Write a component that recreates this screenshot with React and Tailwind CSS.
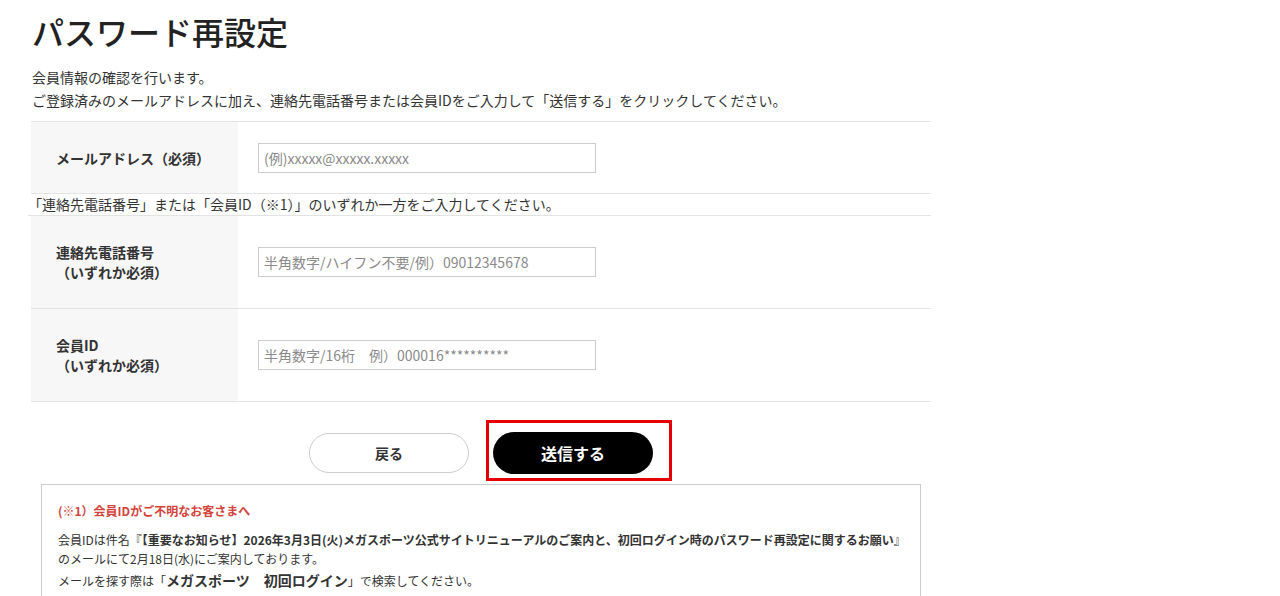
const font = "font-['Noto_Sans_CJK_JP','Noto_Sans',sans-serif]";

const Row = ({ label, placeholder, height }) => (
  <div className={`flex border-b border-[#e3e3e3] ${height}`}>
    <div className="w-[207px] shrink-0 bg-[#f7f7f7] pl-[25px] flex items-center text-[14px] leading-[20px] font-bold text-[#333]">
      <div>{label}</div>
    </div>
    <div className="flex-1 pl-[20px] flex items-center">
      <input
        type="text"
        placeholder={placeholder}
        className="w-[338px] h-[30px] border border-[#cccccc] px-[5px] text-[14px] placeholder:text-[#8a8a8a] outline-none"
      />
    </div>
  </div>
);

export default function App() {
  return (
    <div className={`${font} bg-white text-[#333] min-h-[596px]`}>
      <div className="ml-[31px] w-[900px] pt-[7px]">
        <h1 className="text-[32px] leading-[48px] font-medium text-[#222] pl-[1px]">パスワード再設定</h1>

        <div className="mt-[11px] text-[14px] leading-[23px] pl-[1px]">
          <p>会員情報の確認を行います。</p>
          <p>ご登録済みのメールアドレスに加え、連絡先電話番号または会員IDをご入力して「送信する」をクリックしてください。</p>
        </div>

        <div className="mt-[9px] border-t border-[#e3e3e3]">
          <Row label="メールアドレス（必須）" placeholder="(例)xxxxx@xxxxx.xxxxx" height="h-[72px]" />
          <p className="border-b border-[#e3e3e3] text-[14px] leading-[21px] -ml-[3px]">
            「連絡先電話番号」または「会員ID（※1）」のいずれか一方をご入力してください。
          </p>
          <Row
            label={<>連絡先電話番号<br />（いずれか必須）</>}
            placeholder="半角数字/ハイフン不要/例）09012345678"
            height="h-[93px]"
          />
          <Row
            label={<>会員ID<br />（いずれか必須）</>}
            placeholder="半角数字/16桁　例）000016**********"
            height="h-[93px]"
          />
        </div>

        <div className="mt-[30px] flex justify-center items-center gap-6">
          <button className="w-[160px] h-[40px] rounded-full border border-[#cccccc] bg-white text-[14px] font-bold text-[#333]">
            戻る
          </button>
          <div className="relative">
            <button className="w-[160px] h-[42px] rounded-full bg-black text-white text-[16px] font-bold">
              送信する
            </button>
            <span className="absolute -top-[12px] -left-[7px] -right-[19px] -bottom-[7px] border-[3px] border-[#e60000] pointer-events-none" />
          </div>
        </div>

        <div className="mt-[10px] mx-[10px] border border-[#cccccc] pl-[16px] pr-[4px] pt-[16px] pb-[10px] text-[12px] text-[#333]">
          <p className="font-bold text-[#d2433b] leading-[20px]">(※1）会員IDがご不明なお客さまへ</p>
          <p className="mt-[9px] leading-[19px]">
            <span className="whitespace-nowrap">
              会員IDは件名『<span className="font-bold">【重要なお知らせ】2026年3月3日(火)メガスポーツ公式サイトリニューアルのご案内と、初回ログイン時のパスワード再設定に関するお願い</span>』
            </span>
            <br />
            のメールにて2月18日(水)にご案内しております。
          </p>
          <p className="mt-[1px] leading-[23px]">
            メールを探す際は「<span className="font-bold text-[14px]">メガスポーツ　初回ログイン</span>」で検索してください。
          </p>
        </div>
      </div>
    </div>
  );
}
